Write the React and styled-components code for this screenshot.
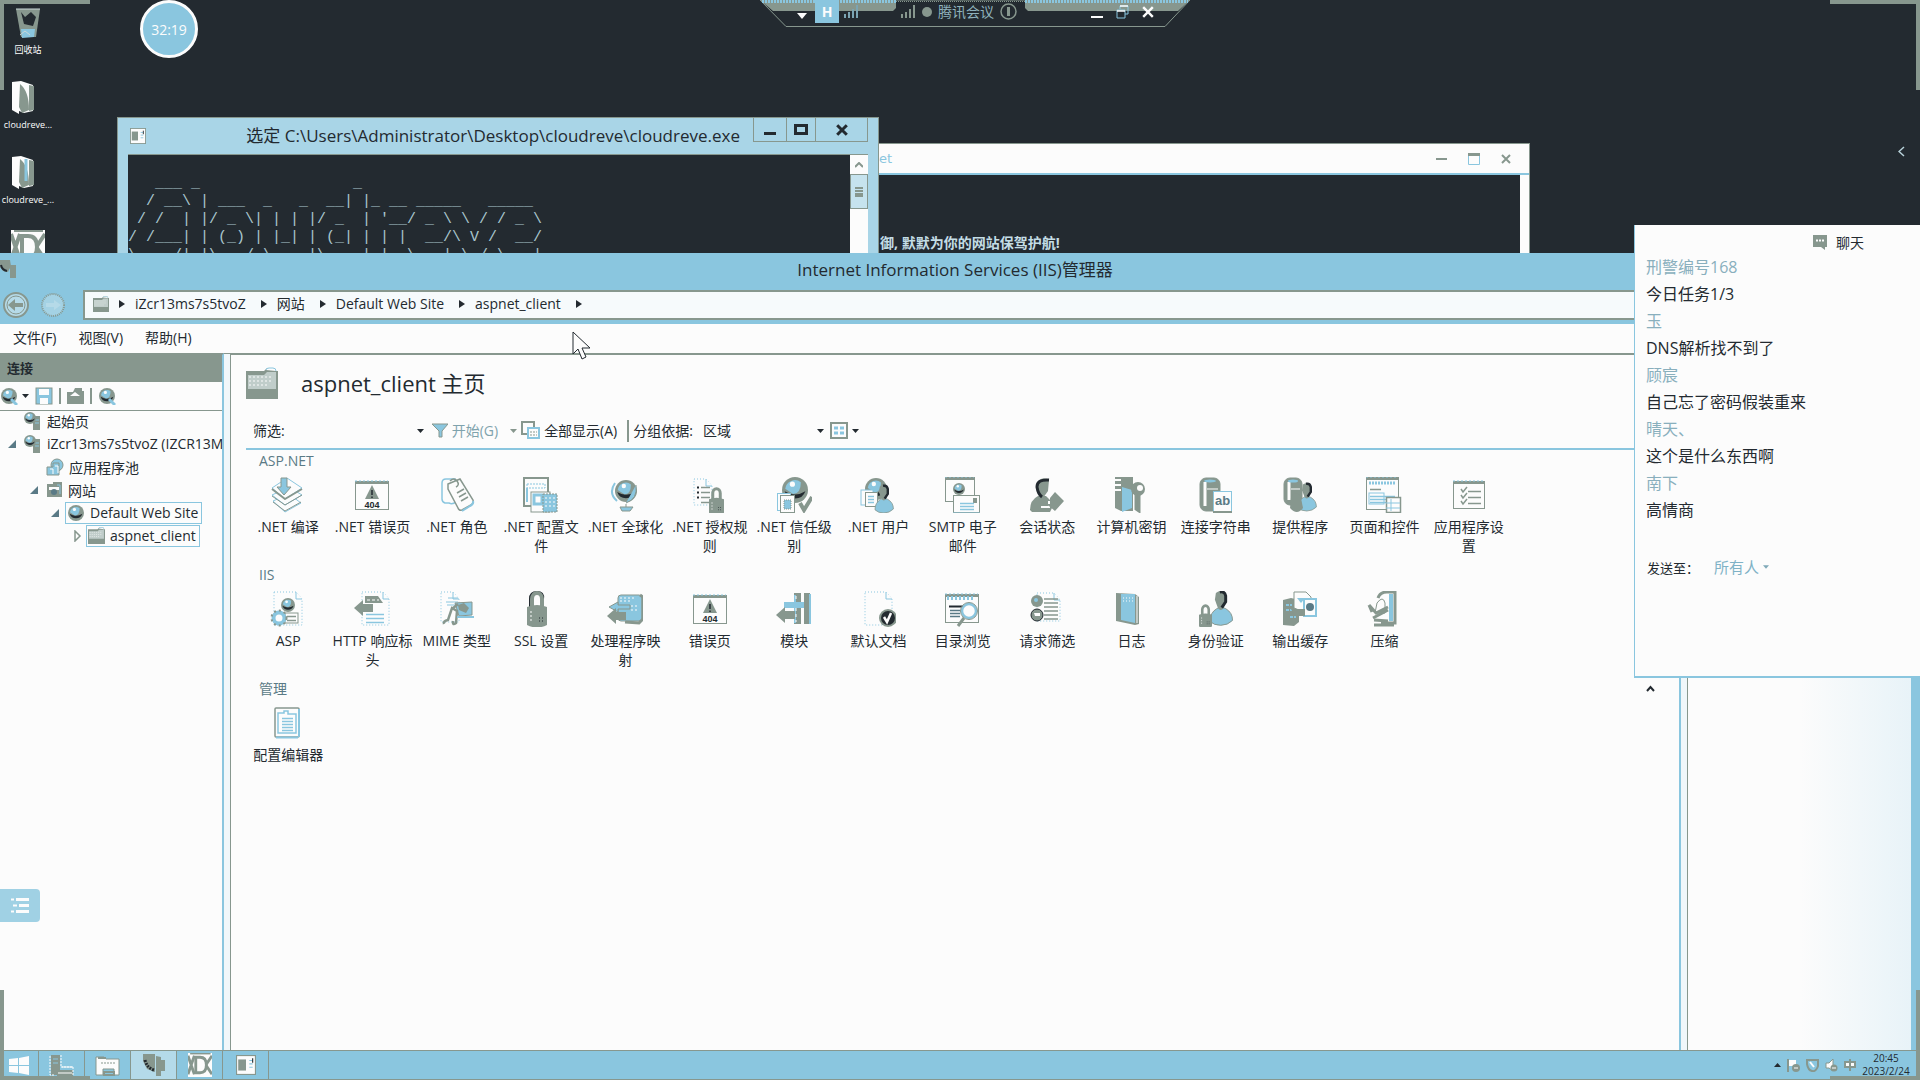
import React from "react";
import styled, { createGlobalStyle, css } from "styled-components";

const dark = "#232a30";
const blue = "#8ac6df";
const gray = "#87978e";
const white = "#fcfcfc";
const pale = "#a9d5e7";
const teal = "#5a7a86";

const GlobalStyle = createGlobalStyle`
  * { box-sizing: border-box; }
  body {
    margin: 0;
    font-family: "Open Sans", "Noto Sans CJK SC", sans-serif;
    font-size: 14px;
    color: ${dark};
    background: ${dark};
    overflow: hidden;
  }
  button, input, select, textarea {
    font: inherit;
    color: inherit;
    background: none;
    border: 0;
    padding: 0;
    margin: 0;
    border-radius: 0;
    appearance: none;
    outline: none;
  }
  svg { display: block; flex: none; }
  h1, h2, p { margin: 0; font-weight: 400; }
`;

const Screen = styled.div`
  position: relative;
  display: flex;
  flex-direction: column;
  height: 100vh;
  background: ${dark};
`;
const Desktop = styled.main`
  position: relative;
  flex: 1;
  min-height: 0;
  overflow: hidden;
`;

/* ---------- frame corners ---------- */
const Corner = styled.span`
  position: absolute;
  z-index: 9;
  width: 90px;
  height: 90px;
  pointer-events: none;
  ${(p) => p.$v}: 0;
  ${(p) => p.$h}: 0;
  border: 0 solid ${gray};
  border-${(p) => p.$v}-width: 4px;
  border-${(p) => p.$h}-width: 4px;
`;

/* ---------- desktop icons ---------- */
const Shortcuts = styled.nav`
  display: flex;
  flex-direction: column;
  gap: 15px;
  width: 56px;
  padding-top: 5px;
`;
const Shortcut = styled.button`
  display: flex;
  flex-direction: column;
  align-items: center;
  gap: 2px;
  height: 60px;
  color: ${white};
  font-size: 9px;
  line-height: 16px;
  white-space: nowrap;
`;
const Timer = styled.div`
  position: absolute;
  top: 0;
  left: 140px;
  width: 58px;
  height: 58px;
  border: 3px solid ${white};
  border-radius: 50%;
  background: ${blue};
  color: ${white};
  font-size: 14px;
  display: flex;
  align-items: center;
  justify-content: center;
`;

/* ---------- meeting bar ---------- */
const MeetingBar = styled.header`
  position: absolute;
  top: 0;
  left: 760px;
  width: 430px;
  height: 27px;
`;
const MeetingShape = styled.svg`
  position: absolute;
  inset: 0;
`;
const MeetingRow = styled.div`
  position: relative;
  display: flex;
  align-items: center;
  height: 23px;
  padding: 0 36px 0 37px;
  color: ${blue};
`;
const HBadge = styled.span`
  width: 24px;
  height: 23px;
  margin: 0 5px 0 8px;
  background: ${blue};
  color: ${white};
  font-weight: 700;
  font-size: 14px;
  line-height: 23px;
  text-align: center;
`;
const MeetingTitle = styled.span`
  display: flex;
  align-items: center;
  gap: 6px;
  margin-left: 42px;
  margin-right: auto;
  font-size: 14px;
  line-height: 20px;
  color: #8fb2bc;
`;
const MeetingControls = styled.span`
  display: flex;
  align-items: center;
  gap: 13px;
  color: ${white};
`;
const PlainButton = styled.button`
  display: flex;
  align-items: center;
  gap: 4px;
  white-space: nowrap;
  color: ${(p) => p.$color || "inherit"};
`;

/* ---------- background windows ---------- */
const ShellWindow = styled.section`
  position: absolute;
  top: 143px;
  left: 600px;
  width: 930px;
  height: 180px;
  border: 1px solid ${gray};
  background: ${white};
  padding: 0 9px;
`;
const ShellTitle = styled.div`
  display: flex;
  align-items: center;
  justify-content: space-between;
  height: 31px;
  margin: 0 -9px;
  padding: 0 18px 0 278px;
  border-bottom: 2px solid ${blue};
  color: ${blue};
  font-family: "DejaVu Sans", sans-serif;
  font-size: 13px;
`;
const ShellControls = styled.span`
  display: flex;
  align-items: center;
  gap: 21px;
  color: ${gray};
`;
const ShellBody = styled.div`
  height: 140px;
  background: ${dark};
  color: #c4dde6;
  padding: 58px 0 0 270px;
  font-size: 14px;
  line-height: 20px;
  font-weight: 700;
`;
const ConsoleWindow = styled.section`
  position: absolute;
  top: 117px;
  left: 117px;
  width: 762px;
  height: 180px;
  border: 1px solid ${gray};
  background: ${pale};
  padding: 0 10px;
`;
const ConsoleTitle = styled.div`
  display: flex;
  align-items: center;
  height: 36px;
  padding-left: 2px;
`;
const ConsoleName = styled.h2`
  flex: 1;
  text-align: right;
  white-space: nowrap;
  font-size: 17px;
  line-height: 24px;
`;
const ConsoleControls = styled.span`
  display: flex;
  align-self: flex-start;
  margin-left: 14px;
`;
const ConsoleButton = styled.button`
  display: flex;
  align-items: center;
  justify-content: center;
  width: ${(p) => p.$w}px;
  height: 24px;
  border: 1px solid ${gray};
  border-top: 0;
  margin-left: -1px;
`;
const ConsoleBody = styled.div`
  display: flex;
  height: 140px;
  background: ${dark};
  border-top: 1px solid ${gray};
`;
const Banner = styled.pre`
  flex: 1;
  margin: 0;
  padding-top: 20px;
  font-family: "Liberation Mono", monospace;
  font-size: 15px;
  line-height: 18px;
  color: #a9c6cd;
`;
const Scroller = styled.div`
  width: 18px;
  background: ${white};
  display: flex;
  flex-direction: column;
  align-items: center;
`;
const ScrollUp = styled.button`
  height: 19px;
  width: 18px;
  display: flex;
  align-items: center;
  justify-content: center;
  color: ${gray};
`;
const Thumb = styled.span`
  width: 18px;
  height: 35px;
  border: 1px solid ${gray};
  background: #c6e3ee;
  display: flex;
  align-items: center;
  justify-content: center;
`;

/* ---------- IIS manager ---------- */
const Manager = styled.section`
  position: absolute;
  top: 253px;
  left: 0;
  right: 0;
  bottom: 0;
  display: flex;
  flex-direction: column;
  background: ${white};
  border-right: 4px solid ${blue};
`;
const ManagerTitle = styled.header`
  display: flex;
  align-items: center;
  height: 37px;
  padding-bottom: 3px;
  background: ${blue};
`;
const ManagerName = styled.h2`
  flex: 1;
  font-size: 17px;
  line-height: 24px;
  text-align: center;
  padding-right: 24px;
`;
const AddressRow = styled.div`
  display: flex;
  height: 34px;
  background: ${blue};
  gap: 14px;
`;
const NavButtons = styled.div`
  display: flex;
  align-items: center;
  gap: 9px;
  width: 69px;
  padding: 0 0 4px 2px;
`;
const Crumbs = styled.nav`
  display: flex;
  align-items: center;
  flex: 1;
  height: 30px;
  border: 2px solid ${gray};
  border-right: 0;
  background: #f6fafc;
  padding: 0 0 2px 8px;
`;
const Crumb = styled.a`
  color: ${dark};
  text-decoration: none;
  font-size: 14px;
  line-height: 20px;
  margin: 0 15px 0 10px;
`;
const MenuBar = styled.nav`
  display: flex;
  align-items: center;
  gap: 22px;
  height: 29px;
  padding: 0 13px 4px;
`;
const Panels = styled.div`
  display: flex;
  flex: 1;
  min-height: 0;
`;
const Sidebar = styled.aside`
  width: 224px;
  border-top: 2px solid ${gray};
  border-right: 2px solid ${blue};
  overflow: hidden;
`;
const SideHeader = styled.h2`
  background: ${gray};
  height: 27px;
  padding-left: 7px;
  font-size: 13px;
  line-height: 27px;
  font-weight: 700;
`;
const SideTools = styled.div`
  display: flex;
  align-items: center;
  gap: 6px;
  height: 29px;
  border-bottom: 1px solid ${gray};
`;
const Separator = styled.span`
  width: 2px;
  height: ${(p) => p.$h}px;
  background: ${gray};
`;
const Tree = styled.ul`
  list-style: none;
  margin: -2px 0 0;
  padding: 0;
`;
const TreeItem = styled.li`
  display: flex;
  align-items: center;
  height: 23px;
  padding-left: ${(p) => p.$indent}px;
  white-space: nowrap;
`;
const TreeToggle = styled.span`
  width: 18px;
  flex: none;
`;
const TreeLabel = styled.button`
  display: flex;
  align-items: center;
  gap: 5px;
  height: 22px;
  padding: 0 3px 0 1px;
  border: 1px solid transparent;
  ${(p) =>
    p.$boxed &&
    css`
      border-color: ${blue};
    `}
`;
const Splitter = styled.div`
  width: 7px;
  border-right: 1px solid ${gray};
  border-top: 1px solid ${gray};
  background: #f0f7fa;
  ${(p) =>
    p.$bar &&
    css`
      width: 9px;
      border-left: 2px solid ${blue};
    `}
`;
const Content = styled.div`
  flex: 1;
  min-width: 0;
  border-top: 2px solid ${gray};
  padding: 10px 0 0 15px;
`;
const PageTitle = styled.div`
  display: flex;
  align-items: center;
  gap: 23px;
  height: 36px;
`;
const PageName = styled.h1`
  font-size: 22px;
  line-height: 32px;
`;
const FilterBar = styled.form`
  display: flex;
  align-items: center;
  height: 49px;
  padding: 12px 0 0 7px;
  border-bottom: 2px solid ${blue};
  font-size: 14px;
  line-height: 20px;
`;
const FilterInput = styled.input`
  width: 120px;
  margin: 0 0 0 12px;
`;
const GroupSelect = styled.select`
  width: 114px;
  margin-left: 10px;
`;
const Space = styled.span`
  width: ${(p) => p.$w}px;
`;
const Group = styled.section`
  height: 114px;
`;
const GroupName = styled.h2`
  height: 27px;
  padding: 1px 0 0 13px;
  font-size: 14px;
  line-height: 20px;
  color: ${teal};
`;
const FeatureGrid = styled.div`
  display: grid;
  grid-template-columns: repeat(15, 1fr);
  max-width: 1265px;
`;
const Feature = styled.button`
  display: flex;
  flex-direction: column;
  align-items: center;
  gap: 4px;
  font-size: 14px;
  line-height: 19px;
  text-align: center;
  align-self: start;
`;
const FeatureLabel = styled.span`
  max-width: 80px;
`;
const Actions = styled.aside`
  width: 228px;
  border-right: 5px solid ${blue};
  background: linear-gradient(to right, ${white} 50%, #e8f3f8);
`;

/* ---------- chat ---------- */
const Chat = styled.aside`
  position: absolute;
  top: 225px;
  right: 0;
  width: 286px;
  height: 453px;
  background: ${white};
  border-left: 1px solid ${blue};
  border-bottom: 2px solid ${blue};
  padding: 5px 0 0 11px;
`;
const ChatHead = styled.h2`
  display: flex;
  align-items: center;
  gap: 8px;
  height: 24px;
  padding-left: 166px;
  font-size: 14px;
`;
const Message = styled.p`
  font-size: 16px;
  line-height: 27px;
  color: ${(p) => (p.$name ? "#89afbd" : dark)};
`;
const SendTo = styled.div`
  display: flex;
  align-items: center;
  height: 26px;
  margin-top: 30px;
  padding-left: 1px;
  font-size: 13px;
`;
const SendSelect = styled.select`
  width: 49px;
  margin-left: 15px;
  font-size: 15px;
  color: #7fb2c6;
`;
const ChatInput = styled.textarea`
  display: block;
  width: 250px;
  height: 70px;
  margin-top: 3px;
  padding-left: 2px;
  font-size: 13px;
  resize: none;
`;
const ScrollMark = styled.span`
  position: absolute;
  top: 685px;
  left: 1646px;
`;
const EdgeArrow = styled.button`
  position: absolute;
  top: 146px;
  right: 15px;
  color: #b8d2da;
`;
const ListButton = styled.button`
  position: absolute;
  top: 889px;
  left: 0;
  width: 40px;
  height: 33px;
  border-radius: 0 4px 4px 0;
  background: #a0d1e4;
  display: flex;
  align-items: center;
  justify-content: center;
`;
const Cursor = styled.svg`
  position: absolute;
  top: 331px;
  left: 572px;
`;

/* ---------- taskbar ---------- */
const Taskbar = styled.footer`
  display: flex;
  align-items: stretch;
  height: 30px;
  background: ${blue};
  border-top: 1px solid ${gray};
  border-bottom: 1px solid ${gray};
`;
const Task = styled.button`
  display: flex;
  align-items: center;
  justify-content: center;
  width: ${(p) => p.$w || 46}px;
  border-right: 1px solid ${gray};
  background: ${(p) => (p.$active ? "#b4dae9" : "transparent")};
`;
const Tray = styled.div`
  display: flex;
  align-items: center;
  gap: 6px;
  margin-left: auto;
  padding-right: 10px;
`;
const Clock = styled.time`
  width: 48px;
  font-size: 10px;
  line-height: 13px;
  text-align: center;
`;

/* ---------- drawings ---------- */
const Tri = ({ c = dark, s = 6 }) => (
  <svg width={s + 1} height="4" viewBox="0 0 7 4"><path d="M0 0h7L3.500 4z" fill={c} /></svg>
);
const RightTri = () => (
  <svg width="6" height="8" viewBox="0 0 6 8"><path d="M0 0l6 4-6 4z" fill={dark} /></svg>
);
const Cross = ({ s = 10, c = "currentColor", w = 2 }) => (
  <svg width={s} height={s} viewBox="0 0 10 10"><path d="M1 1l8 8M9 1l-8 8" stroke={c} strokeWidth={w} /></svg>
);
const Globe = ({ x, y, r }) => (
  <g>
    <circle cx={x} cy={y} r={r} fill={gray} />
    <path d={`M${x - r * 0.8} ${y + r * 0.1}a${r * 0.85} ${r * 0.85} 0 0 0 ${r * 1.6} 0q${-r * 0.8} ${r * 0.5} ${-r * 1.6} 0z`} fill={dark} />
    <path d={`M${x - r * 0.75} ${y - r * 0.1}a${r * 0.75} ${r * 0.75} 0 0 1 ${r * 1.2} ${-r * 0.5}q0 ${r * 0.9} ${-r * 0.6} ${r * 0.9}z`} fill={blue} />
    <circle cx={x - r * 0.2} cy={y - r * 0.45} r={r * 0.2} fill={white} />
  </g>
);
const Lock = ({ x, y, s = 1 }) => (
  <g transform={`translate(${x} ${y}) scale(${s})`}>
    <path d="M5 16V7a5 6 0 0 1 10 0v9" fill="none" stroke={gray} strokeWidth="4" />
    <path d="M0 15q10-4 20 0v18q-10 5-20 0z" fill={gray} />
    <path d="M4 19v12" stroke={white} strokeDasharray="2 2" />
    <path d="M12 26h5M12 29h4" stroke={dark} strokeDasharray="1 2" />
  </g>
);
const Person = ({ x, y, s = 1, body = blue }) => (
  <g transform={`translate(${x} ${y}) scale(${s})`}>
    <path d="M0 31q0-9 7-13l4-2 5 2q7 4 7 12-5 5-12 5T0 31z" fill={body} stroke={gray} />
    <path d="M6 2q5-4 10 0l1 7-3 8q-3 5-6 0L5 9z" fill={gray} />
    <path d="M10 1q5-1 6 4v6l-4 6" fill="none" stroke={dark} strokeWidth="3" />
  </g>
);
const Doc = ({ x, y, w, h, dash }) => (
  <g fill={white} stroke={dash ? blue : gray} strokeDasharray={dash ? "1 2" : undefined}>
    <path d={`M${x} ${y}h${w - 6}l6 7v${h - 7}h${-w}z`} />
    <path d={`M${x + w - 6} ${y}v7h6`} stroke={blue} strokeDasharray="none" />
  </g>
);
const Win = ({ x = 1, y = 4, w = 33, h = 28 }) => (
  <g><rect x={x + 0.5} y={y + 0.5} width={w} height={h} fill={white} stroke={gray} /><path d={`M${x} ${y + 1.5}h${w + 1}`} stroke={gray} strokeWidth="3" /><path d={`M${x} ${y}h${w}`} stroke={blue} strokeDasharray="2 2" /></g>
);
const Lines = ({ x, y, w, n, g = 4, c = gray }) => (
  <path d={Array.from({ length: n }, (_, i) => `M${x} ${y + i * g + 0.5}h${w}`).join("")} stroke={c} strokeWidth="1.500" />
);
const Left = ({ x, y, c = gray }) => <path d={`M${x} ${y}l9-8v4h10v8h-10v4z`} fill={c} />;
const Err = (
  <g><Win /><path d="M18 8l7 14H11z" fill={gray} /><path d="M18 13v5M18 19.500v1.500" stroke={dark} strokeWidth="1.500" /><text x="18" y="30.500" textAnchor="middle" fontSize="9" fontWeight="700" fontFamily="Liberation Sans" fill={dark}>404</text></g>
);
const Cylinder = ({ x = 4, y = 1, w = 18, h = 33 }) => (
  <g><rect x={x} y={y} width={w} height={h} rx="6" fill={gray} stroke={gray} /><path d={`M${x + 5} ${y + 4}v${h - 9}`} stroke={white} strokeWidth="3" /><path d={`M${x + 7} ${y + 11}h${w - 9}`} stroke={white} /><ellipse cx={x + w / 2} cy={y + 3} rx={w / 2 - 4} ry="1.500" fill={blue} /></g>
);

const art = {
  compile: (
    <g fill={white} stroke={gray} strokeLinejoin="round">
      <path d="M3 24l12 11 16-9-12-9z" stroke={blue} /><path d="M3 25l12 9 16-9" fill="none" />
      <path d="M2 18l13 10 17-10-13-8z" stroke={blue} /><path d="M2 19l13 9 17-10" fill="none" />
      <path d="M2 11l13 11 17-11-15-10z" stroke={blue} /><path d="M2 12l13 10 17-10" fill="none" strokeWidth="2" />
      <path d="M11 1h6v9h4l-7 8-7-8h4z" fill={blue} />
    </g>
  ),
  err: Err,
  roles: (
    <g fill={white} strokeWidth="1.500"><path d="M3 6q0-4 4-4h9l2 22q-4 4-8 2H6q-3-1-3-4z" stroke={blue} /><path d="M9 7l12-5 13 21q1 3-2 5l-9 5q-3 1-4-2L9 12z" stroke={gray} /><path d="M34 24q1 3-3 5l-8 5" stroke={blue} fill="none" strokeWidth="2" /><path d="M11 4q4-4 7 0t-1 6" fill="none" stroke={gray} /><path d="M18 16l7-4M20 20l7-4M22 24l7-4" stroke={gray} /></g>
  ),
  profile: (
    <g><rect x="1" y="1" width="24" height="28" fill={white} stroke={gray} strokeWidth="2" /><path d="M4 7h18v4H4z" fill="none" stroke={blue} strokeDasharray="2 1" /><path d="M4 11v14" stroke={blue} strokeWidth="2" /><rect x="8" y="15" width="19" height="20" fill={white} stroke={gray} /><rect x="11" y="18" width="8" height="9" fill={white} stroke={blue} strokeWidth="3" /><rect x="20" y="17" width="14" height="18" fill={blue} stroke={gray} strokeDasharray="2 1" /><path d="M22 21h10M22 25h10M22 29h10" stroke={white} strokeDasharray="2 2" /></g>
  ),
  global: (
    <g><path d="M8 6q-7 10 2 18" fill="none" stroke={blue} strokeWidth="2" /><Globe x={19} y={14} r={11} /><path d="M29 8q2 14-10 18M19 27v3M13 30h13l-3 4h-8z" fill={blue} stroke={gray} /></g>
  ),
  auth: (<g><Doc x={2} y={2} w={18} h={26} dash /><Lines x={9} y={10} w={9} n={4} g={5} /><path d="M5 10.500h2M5 15.500h2M5 20.500h2" stroke={dark} strokeWidth="2" /><Lock x={17} y={11} s={0.75} /></g>),
  trust: (<g><Globe x={19} y={13} r={13} /><rect x="1.500" y="16.500" width="13" height="17" fill={white} stroke={blue} /><rect x="4.500" y="18.500" width="14" height="17" fill={white} stroke={gray} /><rect x="8" y="23" width="7" height="9" fill={blue} stroke={gray} strokeDasharray="1 1" /><path d="M24 26l4 7 8-13" fill="none" stroke={gray} strokeWidth="4" /></g>),
  user: (<g><Globe x={16} y={12} r={11} /><rect x="1" y="13" width="12" height="15" fill={white} stroke={blue} /><rect x="5.500" y="15.500" width="12" height="14" fill={white} stroke={gray} /><Lines x={8} y={19} w={6} n={3} g={3} c={blue} /><Person x={15} y={8} s={0.8} /></g>),
  smtp: (<g><Win x={0} y={0} w={29} h={24} /><Globe x={14} y={12} r={6} /><rect x="8.500" y="18.500" width="26" height="17" fill={white} stroke={gray} /><path d="M8 36h27" stroke={blue} /><rect x="28" y="21" width="4" height="5" fill={gray} /><Lines x={15} y={26} w={14} n={3} g={3} c={blue} /></g>),
  session: (<g><path d="M1 33q0-10 8-14h8l8 8-4 8H3z" fill={gray} /><path d="M9 4q5-5 11-1l-1 11-5 7-6-9z" fill={gray} /><path d="M20 3q-12-1-12 7 1 7 5 10" fill="none" stroke={dark} strokeWidth="3" /><path d="M12 30h8v-6" stroke={white} fill="none" strokeWidth="2" /><path d="M14 27h7v-6l5-6 9 9-9 10-6-5z" fill={gray} /></g>),
  key: (<g><path d="M2 0h18v34H8l-6-3z" fill={gray} /><path d="M2 3h6M2 8h6M2 13h6" stroke={white} strokeWidth="2" /><path d="M9 10l10 3v18l-10 4z" fill={blue} /><circle cx="25" cy="12" r="7" fill={gray} /><circle cx="27" cy="11" r="3" fill={white} /><path d="M23 17v15l3 2v-17" stroke={gray} strokeWidth="3" /></g>),
  conn: (<g><Cylinder x={2} w={20} /><rect x="15.500" y="14.500" width="18" height="20" fill={white} stroke={blue} /><path d="M15 35h19" stroke={gray} strokeWidth="2" /><text x="24.500" y="28" textAnchor="middle" fontSize="13" fontWeight="700" fontFamily="Liberation Sans" fill={teal}>ab</text></g>),
  provider: (<g><Cylinder x={2} w={18} h={27} /><Person x={16} y={6} s={0.8} /><path d="M9 21q5-10 10 0l2 10q-6 8-13 0z" fill={gray} /></g>),
  pages: (<g><Win x={0} y={0} w={32} h={32} /><path d="M3 6h26" stroke={blue} strokeWidth="3" strokeDasharray="2 1" /><Lines x={4} y={12} w={11} n={1} /><rect x="3" y="16" width="15" height="11" fill="none" stroke={blue} /><Lines x={4} y={19} w={25} n={3} g={3} c={blue} /><rect x="20.500" y="20.500" width="14" height="15" fill={white} stroke={gray} strokeWidth="1.500" /><path d="M25 22v12M20 26h14M20 31h14" stroke={blue} /></g>),
  settings: (<g><Win x={2} y={4} w={31} h={27} /><Lines x={17} y={14} w={13} n={3} g={6} /><path d="M10 12l2 3 4-5M10 18l2 3 4-5M10 24l2 3 4-5" fill="none" stroke={gray} strokeWidth="1.500" /></g>),
  asp: (<g><Doc x={4} y={1} w={28} h={33} dash /><Globe x={18} y={14} r={7} /><rect x="15" y="22" width="13" height="10" fill={white} stroke={gray} /><Lines x={17} y={25} w={9} n={2} g={4} /><circle cx="9" cy="27" r="5.500" fill={white} stroke={blue} strokeWidth="4" /><circle cx="9" cy="27" r="7.500" fill="none" stroke={gray} strokeDasharray="2 3" strokeWidth="2" /></g>),
  http: (<g><Doc x={8} y={1} w={27} h={33} dash /><path d="M11 5h13l5 7H11z" fill={gray} /><path d="M13 9h12" stroke={white} strokeDasharray="3 2" /><Left x={0} y={17} /><Lines x={12} y={23} w={18} n={3} c={blue} /></g>),
  mime: (<g><Doc x={2} y={1} w={18} h={30} dash /><path d="M9 7h10M7 11h12M8 14h8" stroke={blue} /><path d="M16 12l17-1v13l-13 1z" fill={blue} stroke={gray} /><path d="M19 14l6-2 5 5-3 5-7-3z" fill={gray} /><path d="M5 33q-1-3 4-4l4-12 5 3-1 12q-4 3-3-2M13 18l6-5" fill="none" stroke={gray} strokeWidth="2.500" /><path d="M18 26h17" stroke={blue} strokeWidth="2" /></g>),
  ssl: (<g><path d="M7 17V8q0-7 7-7t6 7v9" fill="none" stroke={dark} strokeWidth="2" /><Lock x={4} y={1} /></g>),
  handler: (<g><rect x="11" y="4" width="24" height="26" rx="3" fill={blue} stroke={gray} /><path d="M33 4l3 2v22l-4 4-14-1" fill="none" stroke={gray} strokeWidth="3" /><path d="M13 7h16M13 10h12M24 15h6M24 19h6" stroke={white} strokeDasharray="2 2" /><path d="M23 14h-12v-3l-9 5 9 5v-3h12z" fill={blue} stroke={gray} /><Left x={0} y={25} /></g>),
  module: (<g><path d="M18 2h7v31h-7zM28 2h6v31h-6z" fill={gray} /><path d="M19 4v28M34 3v30" stroke={blue} strokeWidth="2" /><path d="M20 5v26" stroke={white} strokeDasharray="3 3" /><path d="M28 11H8v6h20z" fill={blue} /><Left x={0} y={24} /></g>),
  defdoc: (<g><Doc x={5} y={1} w={27} h={33} dash /><circle cx="28" cy="27" r="9" fill={gray} /><circle cx="28" cy="27" r="7" fill={dark} /><path d="M24 26l3 5 4-9" fill="none" stroke={white} strokeWidth="2.500" /></g>),
  browse: (<g><Win x={0} y={3} w={33} h={28} /><path d="M2 7h28" stroke={blue} strokeWidth="4" strokeDasharray="2 2" /><path d="M4 15.500h14" stroke={dark} strokeWidth="2" /><Lines x={5} y={19} w={10} n={3} g={3} c={teal} /><path d="M19 27l-6 8" stroke={gray} strokeWidth="3" /><circle cx="24" cy="20" r="7" fill={white} stroke={blue} strokeWidth="2.500" /><circle cx="24" cy="20" r="8.500" fill="none" stroke={gray} /></g>),
  request: (<g><Doc x={8} y={2} w={23} h={28} dash /><circle cx="8" cy="10" r="6" fill={gray} /><circle cx="7" cy="9" r="2" fill={blue} /><circle cx="8" cy="24" r="6" fill={gray} stroke={dark} /><path d="M5 22h6v3H6z" fill={white} /><path d="M15 8h14M15 12h14M15 16h14M15 20h14M15 24h14M15 28h14" stroke={gray} strokeWidth="1.500" /></g>),
  log: (<g><path d="M3 2l19 1 4 3v27l-4 1-19-4z" fill={gray} /><path d="M8 3h14v29l-14-3z" fill={blue} /><path d="M24 5v27" stroke={white} /><path d="M10 7h10M10 10h10" stroke={white} strokeDasharray="1 2" /></g>),
  ident: (<g><Person x={12} y={0} s={0.98} /><Lock x={1} y={14} s={0.65} /></g>),
  cache: (<g><path d="M1 9l8-2 8 2v22l-5 4-11-1z" fill={gray} /><path d="M4 14h6M4 19h6M8 26h6" stroke={blue} strokeWidth="2" strokeDasharray="3 1" /><path d="M12 1h12l5 5v13l-7 2-10-4z" fill={white} stroke={gray} /><path d="M15 7h8l-4 5z" fill={blue} /><rect x="22" y="8" width="12" height="17" fill={white} stroke={blue} strokeWidth="2" /><circle cx="28" cy="16" r="4" fill={teal} /><path d="M9 18h14v7H13z" fill={gray} /></g>),
  zip: (<g><path d="M12 7q2-6 9-6h8v31H15" fill="none" stroke={gray} strokeWidth="3" /><path d="M25 3v27" stroke={blue} strokeWidth="4" /><path d="M11 12q6-8 8 0v10H9z" fill={white} stroke={gray} /><path d="M3 14l7 8 12-6M7 27l15-8M3 14l3 7" fill="none" stroke={gray} strokeWidth="3" /><path d="M8 29l14 1M8 34h20" stroke={gray} strokeWidth="3" /></g>),
  config: (<g><rect x="5" y="3" width="24" height="29" rx="1" fill={white} stroke={gray} strokeWidth="1.500" /><path d="M29 4v28M6 32.500h22" stroke={blue} strokeWidth="2" /><path d="M8 8h6V6h4v3h8v19H8z" fill={white} stroke={blue} strokeWidth="1.500" /><Lines x={12} y={13} w={11} n={5} g={3} c={blue} /></g>),
};
const FeatureIcon = ({ name }) => <svg width="36" height="36" viewBox="0 0 36 36">{art[name]}</svg>;

const Folder = ({ w = 17, h = 17 }) => (
  <svg width={w} height={h} viewBox="0 0 32 32">
    <path d="M0 4h18l3-3h8v3h3v28H0z" fill={gray} /><path d="M20 3q0-2 3-2h4q3 0 3 3" fill={white} stroke={blue} />
    <path d="M2 8h16l3-3h9v17H2z" fill="#c0cdca" /><path d="M3 10h24M3 14h24M3 18h20" stroke={white} strokeDasharray="2 2" />
  </svg>
);
const Server = () => (
  <svg width="18" height="18" viewBox="0 0 18 18"><path d="M9 4h7v14H9z" fill={gray} /><path d="M11 8h4M11 11h4" stroke={blue} /><Globe x={6} y={6} r={6} /></svg>
);
const SmallGlobe = ({ tool }) => (
  <svg width="18" height="18" viewBox="0 0 18 18"><Globe x={9} y={9} r={8} />{tool && <path d="M11 12l6 6" stroke={blue} strokeWidth="3" />}</svg>
);
const Pool = () => (
  <svg width="18" height="18" viewBox="0 0 18 18"><circle cx="11" cy="7" r="6" fill={blue} stroke={gray} /><path d="M1 17V9h6V5h6v12z" fill={blue} stroke={gray} /><path d="M4 11h3v5M9 8h3v7" stroke={white} fill="none" /></svg>
);
const Sites = () => (
  <svg width="17" height="17" viewBox="0 0 17 17"><path d="M1 3h6v-2h9v15H1z" fill={gray} /><path d="M3 6h10v3H3z" fill={white} /><circle cx="8" cy="11" r="3" fill={teal} /><path d="M11 4h3v9" stroke={blue} fill="none" /></svg>
);
const ConsoleIcon = ({ w = 18 }) => (
  <svg width={w} height={w} viewBox="0 0 18 18"><rect x=".5" y=".5" width="17" height="17" fill={white} stroke={gray} /><rect x="2" y="4" width="7" height="10" fill={gray} /><path d="M12 5h3M12 8h3M12 11h3" stroke={blue} /><path d="M15 3v4" stroke={dark} /></svg>
);
const Xdx = ({ s = 34 }) => (
  <svg width={s} height={s} viewBox="0 0 34 34"><rect width="34" height="34" fill={white} /><path d="M0 4L9 30M0 30L9 4M34 4l-8 12M34 30l-8-12" stroke={gray} strokeWidth="4" /><path d="M11 6h6q9 0 9 11t-9 11h-6z" fill="none" stroke={gray} strokeWidth="4" /><path d="M3 1h29" stroke={gray} strokeWidth="2" /></svg>
);
const BigFolder = ({ mark }) => (
  <svg width="34" height="35" viewBox="0 0 34 35"><path d="M1 2l9-1 12 4v26l-9 2-5-2v3L1 30z" fill={white} /><path d="M9 4q9 7 9 26l-7 3-3-6z" fill={gray} /><path d="M18 5l5 1v24l-5 1z" fill={gray} />{mark && <path d="M15 4v22" stroke={blue} strokeWidth="3" />}</svg>
);
const Bin = () => (
  <svg width="28" height="35" viewBox="0 0 28 35"><path d="M2 4h24l-4 28H7z" fill={gray} /><path d="M7 7l4 5 6-5 5 5-3 9-9-2z" fill={dark} /><path d="M7 24h14l-1 8-12 1z" fill={blue} /><path d="M2 4h24M6 30l5-4 5 4" stroke="#cbd7d8" fill="none" /></svg>
);

const groups = [
  ["ASP.NET", [["compile", ".NET 编译"], ["err", ".NET 错误页"], ["roles", ".NET 角色"], ["profile", ".NET 配置文件"], ["global", ".NET 全球化"], ["auth", ".NET 授权规则"], ["trust", ".NET 信任级别"], ["user", ".NET 用户"], ["smtp", "SMTP 电子邮件"], ["session", "会话状态"], ["key", "计算机密钥"], ["conn", "连接字符串"], ["provider", "提供程序"], ["pages", "页面和控件"], ["settings", "应用程序设置"]]],
  ["IIS", [["asp", "ASP"], ["http", "HTTP 响应标头"], ["mime", "MIME 类型"], ["ssl", "SSL 设置"], ["handler", "处理程序映射"], ["err", "错误页"], ["module", "模块"], ["defdoc", "默认文档"], ["browse", "目录浏览"], ["request", "请求筛选"], ["log", "日志"], ["ident", "身份验证"], ["cache", "输出缓存"], ["zip", "压缩"]]],
  ["管理", [["config", "配置编辑器"]]],
];

const tree = [
  { indent: 4, text: "起始页", icon: <Server /> },
  { indent: 4, text: "iZcr13ms7s5tvoZ (IZCR13M", icon: <Server />, open: true },
  { indent: 26, text: "应用程序池", icon: <Pool /> },
  { indent: 26, text: "网站", icon: <Sites />, open: true },
  { indent: 47, text: "Default Web Site", icon: <SmallGlobe />, open: true, boxed: true },
  { indent: 68, text: "aspnet_client", icon: <Folder />, closed: true, boxed: true },
];

const messages = [
  ["刑警编号168", "今日任务1/3"],
  ["玉", "DNS解析找不到了"],
  ["顾宸", "自己忘了密码假装重来"],
  ["晴天、", "这个是什么东西啊"],
  ["南下", "高情商"],
];

const banner = String.raw`   ___ _                 _
  / __\ | ___  _   _  __| |_ __ _____   _____
 / /  | |/ _ \| | | |/ _  | '__/ _ \ \ / / _ \
/ /___| | (_) | |_| | (_| | | |  __/\ V /  __/
\____/|_|\___/ \__,_|\__,_|_|  \___| \_/ \___|`;

const Bars = ({ c }) => (
  <svg width="15" height="13" viewBox="0 0 15 13"><path d="M1 13V9M5 13V7M9 13V4M13 13V0" stroke={c} strokeWidth="2" /></svg>
);

export default function App() {
  return (
    <Screen>
      <GlobalStyle />
      <Desktop>
        <Shortcuts aria-label="桌面">
          <Shortcut><Bin />回收站</Shortcut>
          <Shortcut><BigFolder />cloudreve...</Shortcut>
          <Shortcut><BigFolder mark />cloudreve_...</Shortcut>
          <Shortcut aria-label="XDX"><Xdx /></Shortcut>
        </Shortcuts>
        <Timer>32:19</Timer>

        <MeetingBar>
          <MeetingShape width="430" height="27" viewBox="0 0 430 27">
            <path d="M0 0h430l-25 26.500H26z" fill={dark} stroke={gray} />
            <path d="M0 0h136v8l-3 3H13z" fill={gray} />
            <path d="M265 0h165l-12 11H268l-3-3z" fill={gray} />
            <path d="M2 1.500h134M265 1.500h163" stroke={blue} strokeWidth="3" strokeDasharray="2 1" />
            <path d="M136 1.500h129" stroke={gray} strokeDasharray="1 1" />
          </MeetingShape>
          <MeetingRow>
            <svg width="10" height="18" viewBox="0 0 10 18"><path d="M0 10h10l-5 6z" fill={white} /></svg>
            <HBadge>H</HBadge>
            <Bars c="#7ba4b3" />
            <MeetingTitle>
              <Bars c={gray} />
              <svg width="10" height="10"><circle cx="5" cy="5" r="5" fill={gray} /></svg>
              腾讯会议
              <svg width="17" height="17" viewBox="0 0 17 17"><circle cx="8.500" cy="8.500" r="7.500" fill="none" stroke={gray} strokeWidth="1.500" /><path d="M8.500 4v9" stroke={gray} strokeWidth="3" /></svg>
            </MeetingTitle>
            <MeetingControls>
              <PlainButton aria-label="最小化"><svg width="12" height="12"><path d="M0 11h12" stroke={white} strokeWidth="2" /></svg></PlainButton>
              <PlainButton aria-label="还原"><svg width="13" height="14" viewBox="0 0 13 14"><path d="M4 4V1h8v8h-3M1 5h8v8H1z" fill="none" stroke={blue} /><path d="M1 6h8M4 1h8" stroke={white} strokeWidth="1.500" /></svg></PlainButton>
              <PlainButton aria-label="关闭"><Cross s={12} /></PlainButton>
            </MeetingControls>
          </MeetingRow>
        </MeetingBar>

        <ShellWindow>
          <ShellTitle>
            et
            <ShellControls>
              <PlainButton aria-label="最小化"><svg width="11" height="12"><path d="M0 6h11" stroke={gray} strokeWidth="2" /></svg></PlainButton>
              <PlainButton aria-label="最大化"><svg width="12" height="12"><path d="M.5.5h11v11H.5z" fill="none" stroke={blue} /><path d="M0 1.500h12" stroke={gray} strokeWidth="3" /></svg></PlainButton>
              <PlainButton aria-label="关闭"><Cross /></PlainButton>
            </ShellControls>
          </ShellTitle>
          <ShellBody>御, 默默为你的网站保驾护航!</ShellBody>
        </ShellWindow>

        <ConsoleWindow>
          <ConsoleTitle>
            <ConsoleIcon w={16} />
            <ConsoleName>选定 C:\Users\Administrator\Desktop\cloudreve\cloudreve.exe</ConsoleName>
            <ConsoleControls>
              <ConsoleButton $w={34} aria-label="最小化"><svg width="12" height="12"><path d="M0 9.500h12" stroke={dark} strokeWidth="3" /></svg></ConsoleButton>
              <ConsoleButton $w={30} aria-label="最大化"><svg width="14" height="11"><path d="M1.500 1.500h11v8h-11z" fill="none" stroke={dark} strokeWidth="3" /></svg></ConsoleButton>
              <ConsoleButton $w={53} aria-label="关闭"><Cross s={12} w={2.5} c={dark} /></ConsoleButton>
            </ConsoleControls>
          </ConsoleTitle>
          <ConsoleBody>
            <Banner>{banner}</Banner>
            <Scroller>
              <ScrollUp aria-label="向上滚动"><svg width="8" height="6"><path d="M0 5l4-4 4 4" fill="none" stroke={gray} strokeWidth="2" /></svg></ScrollUp>
              <Thumb><svg width="8" height="10"><path d="M0 1h8M0 4h8M0 7h8M0 9h8" stroke={gray} strokeWidth="2" /></svg></Thumb>
            </Scroller>
          </ConsoleBody>
        </ConsoleWindow>

        <Manager>
          <ManagerTitle>
            <svg width="18" height="20" viewBox="0 0 18 20"><path d="M0 0h10l1 6-3 6-5-1-3-4z" fill={gray} /><path d="M1 5q1 5 6 6" stroke={dark} strokeWidth="2" fill="none" /><path d="M10 5h6v13h-6z" fill={gray} /></svg>
            <ManagerName>Internet Information Services (IIS)管理器</ManagerName>
          </ManagerTitle>
          <AddressRow>
            <NavButtons>
              <PlainButton aria-label="后退"><svg width="28" height="28"><circle cx="14" cy="14" r="12" fill="#b5dae8" stroke={gray} strokeWidth="2" /><circle cx="14" cy="14" r="9" fill="none" stroke={gray} /><path d="M6 14l7-6v4h8v4h-8v4z" fill={gray} /></svg></PlainButton>
              <PlainButton aria-label="前进"><svg width="28" height="28"><circle cx="14" cy="14" r="11" fill="#a4d2e4" stroke={gray} strokeDasharray="1 1" strokeWidth="2" /><path d="M22 14l-7-5v3H7v4h8v3z" fill="#b5dae8" /></svg></PlainButton>
            </NavButtons>
            <Crumbs aria-label="路径">
              <Folder w={16} h={18} /><Space $w={10} /><RightTri />
              <Crumb href="#server">iZcr13ms7s5tvoZ</Crumb><RightTri />
              <Crumb href="#sites">网站</Crumb><RightTri />
              <Crumb href="#default">Default Web Site</Crumb><RightTri />
              <Crumb href="#client">aspnet_client</Crumb><RightTri />
            </Crumbs>
          </AddressRow>
          <MenuBar>
            <PlainButton>文件(F)</PlainButton>
            <PlainButton>视图(V)</PlainButton>
            <PlainButton>帮助(H)</PlainButton>
          </MenuBar>
          <Panels>
            <Sidebar>
              <SideHeader>连接</SideHeader>
              <SideTools>
                <PlainButton aria-label="连接"><SmallGlobe tool /><Tri /></PlainButton>
                <PlainButton aria-label="保存"><svg width="18" height="18"><rect x="1" y="1" width="16" height="16" fill={blue} stroke={gray} /><path d="M4 2h10v6H4zM5 11h8v6H5z" fill={white} /></svg></PlainButton>
                <Separator $h={16} />
                <PlainButton aria-label="向上"><svg width="17" height="18"><path d="M0 5h6l2-4h7v3h2v13H0z" fill={gray} /><path d="M3 9l5-4 5 4" fill={white} /></svg></PlainButton>
                <Separator $h={16} />
                <PlainButton aria-label="停止"><SmallGlobe tool /></PlainButton>
              </SideTools>
              <Tree>
                {tree.map((n) => (
                  <TreeItem key={n.text} $indent={n.indent}>
                    <TreeToggle>
                      {n.open && <svg width="12" height="8"><path d="M12 0v8H4z" fill={teal} /></svg>}
                      {n.closed && <svg width="14" height="12"><path d="M7 1l5 5-5 5z" fill="none" stroke={gray} strokeWidth="1.500" /></svg>}
                    </TreeToggle>
                    <TreeLabel $boxed={n.boxed}>{n.icon}{n.text}</TreeLabel>
                  </TreeItem>
                ))}
              </Tree>
            </Sidebar>
            <Splitter />
            <Content>
              <PageTitle>
                <Folder w={32} h={32} />
                <PageName>aspnet_client 主页</PageName>
              </PageTitle>
              <FilterBar>
                <label htmlFor="filter">筛选:</label>
                <FilterInput id="filter" />
                <Tri />
                <Space $w={8} />
                <PlainButton type="button" $color="#7fa3ad"><svg width="16" height="15"><path d="M0 1h16l-6 7v6H7V8z" fill={blue} stroke={gray} /></svg>开始(G)</PlainButton>
                <Space $w={12} /><Tri c={gray} /><Space $w={4} />
                <PlainButton type="button"><svg width="19" height="19"><rect x="1" y="1" width="12" height="12" fill={white} stroke={gray} strokeWidth="2" /><rect x="7" y="7" width="11" height="10" fill={white} stroke={blue} strokeWidth="2" /><path d="M9 11h7M9 14h7" stroke={gray} strokeDasharray="2 1" /></svg>全部显示(A)</PlainButton>
                <Space $w={10} /><Separator $h={22} /><Space $w={4} />
                <label htmlFor="group">分组依据:</label>
                <GroupSelect id="group"><option>区域</option></GroupSelect>
                <Tri /><Space $w={6} />
                <PlainButton type="button" aria-label="视图"><svg width="18" height="17"><rect x="1" y="1" width="16" height="15" fill={white} stroke={gray} strokeWidth="2" /><path d="M4 6h4M10 6h4M4 11h4M10 11h4" stroke={blue} strokeWidth="3" /></svg><Tri /></PlainButton>
              </FilterBar>
              {groups.map(([name, items]) => (
                <Group key={name}>
                  <GroupName>{name}</GroupName>
                  <FeatureGrid>
                    {items.map(([icon, text]) => (
                      <Feature key={text}><FeatureIcon name={icon} /><FeatureLabel>{text}</FeatureLabel></Feature>
                    ))}
                  </FeatureGrid>
                </Group>
              ))}
            </Content>
            <Splitter $bar />
            <Actions />
          </Panels>
        </Manager>

        <Cursor width="22" height="30" viewBox="0 0 22 30"><path d="M1 1v22l5-5 4 10 4-2-4-9h8z" fill={white} stroke={dark} /></Cursor>
        <ScrollMark><svg width="9" height="7"><path d="M1 6l3.500-4L8 6" fill="none" stroke={dark} strokeWidth="2" /></svg></ScrollMark>
        <EdgeArrow aria-label="展开"><svg width="7" height="11"><path d="M6 1L1 5.500l5 4.500" fill="none" stroke="currentColor" strokeWidth="1.500" /></svg></EdgeArrow>
        <ListButton aria-label="列表"><svg width="18" height="17"><path d="M5 2.500h13M8 8.500h10M5 14.500h13" stroke={white} strokeWidth="3" /><path d="M0 2.500h3M2 8.500h4M0 14.500h3" stroke={white} strokeWidth="2" /></svg></ListButton>

        <Chat>
          <ChatHead>
            <svg width="16" height="15"><path d="M1 0h14v12h-2v3l-4-3H1z" fill={gray} /><path d="M4 5.500h2M7 5.500h2M10 5.500h2" stroke={white} strokeWidth="2" /></svg>
            聊天
          </ChatHead>
          {messages.map(([who, text]) => (
            <React.Fragment key={who}>
              <Message $name>{who}</Message>
              <Message>{text}</Message>
            </React.Fragment>
          ))}
          <SendTo>
            <label htmlFor="send">发送至：</label>
            <SendSelect id="send"><option>所有人</option></SendSelect>
            <Tri c="#7fa9b8" s={5} />
          </SendTo>
          <ChatInput aria-label="消息" />
        </Chat>
      </Desktop>

      <Taskbar>
        <Task $w={39} aria-label="开始"><svg width="20" height="19"><path d="M0 3l9-1v7H0zM10 2l10-2v9H10zM0 10h9v7l-9-1zM10 10h10v9l-10-2z" fill={white} /></svg></Task>
        <Task aria-label="服务器管理器"><svg width="26" height="23"><path d="M2 1h9v20H2zM8 16h16v7H8z" fill={gray} /><path d="M12 1v12h12v8M1 2v19h4" fill="none" stroke={white} strokeDasharray="2 1" /><path d="M13 13h11M9 19h14" stroke={white} /><path d="M4 5h5M4 9h5" stroke={blue} /></svg></Task>
        <Task aria-label="资源管理器"><svg width="25" height="21"><path d="M1 2h8l2 2h13v16h-5v-6H8v6H1z" fill={white} stroke={gray} /><path d="M3 3h8M9 17h10v3H9z" stroke={gray} strokeWidth="2" fill={blue} /><path d="M6 8h14" stroke={gray} strokeDasharray="2 1" /></svg></Task>
        <Task $active aria-label="IIS管理器"><svg width="24" height="24"><path d="M1 1h12v18l-8-3-4-8z" fill={gray} /><path d="M3 7q2 8 9 10" fill="none" stroke={dark} strokeWidth="3" strokeDasharray="2 1" /><path d="M14 3l5 1v3h4v11h-4v5h-5z" fill={gray} /></svg></Task>
        <Task aria-label="XDX"><Xdx s={24} /></Task>
        <Task aria-label="命令行"><ConsoleIcon w={20} /></Task>
        <Tray>
          <svg width="7" height="4"><path d="M0 4h7L3.500 0z" fill={dark} /></svg>
          <svg width="13" height="13"><path d="M1 0v13" stroke={gray} strokeWidth="2" /><path d="M2 1h7v6H2z" fill={white} /><circle cx="9" cy="9" r="4" fill={gray} /><path d="M7 9h4" stroke={white} /></svg>
          <svg width="13" height="13"><path d="M1 1h11v6q-2 6-6 5t-5-7z" fill="none" stroke={gray} strokeWidth="2" /><path d="M4 3l4 5" stroke={white} strokeWidth="2" /></svg>
          <svg width="13" height="13"><path d="M1 4h3l4-4v12L4 9H1z" fill={white} stroke={gray} /><circle cx="9" cy="9" r="3.500" fill={gray} /><path d="M7 9h4" stroke={white} /></svg>
          <svg width="12" height="12"><path d="M1 3h10v5H1zM6 0v12" fill={white} stroke={gray} strokeWidth="2" /></svg>
          <Clock>20:45<br />2023/2/24</Clock>
        </Tray>
      </Taskbar>

      <Corner $v="top" $h="left" />
      <Corner $v="top" $h="right" />
      <Corner $v="bottom" $h="left" />
      <Corner $v="bottom" $h="right" />
    </Screen>
  );
}
